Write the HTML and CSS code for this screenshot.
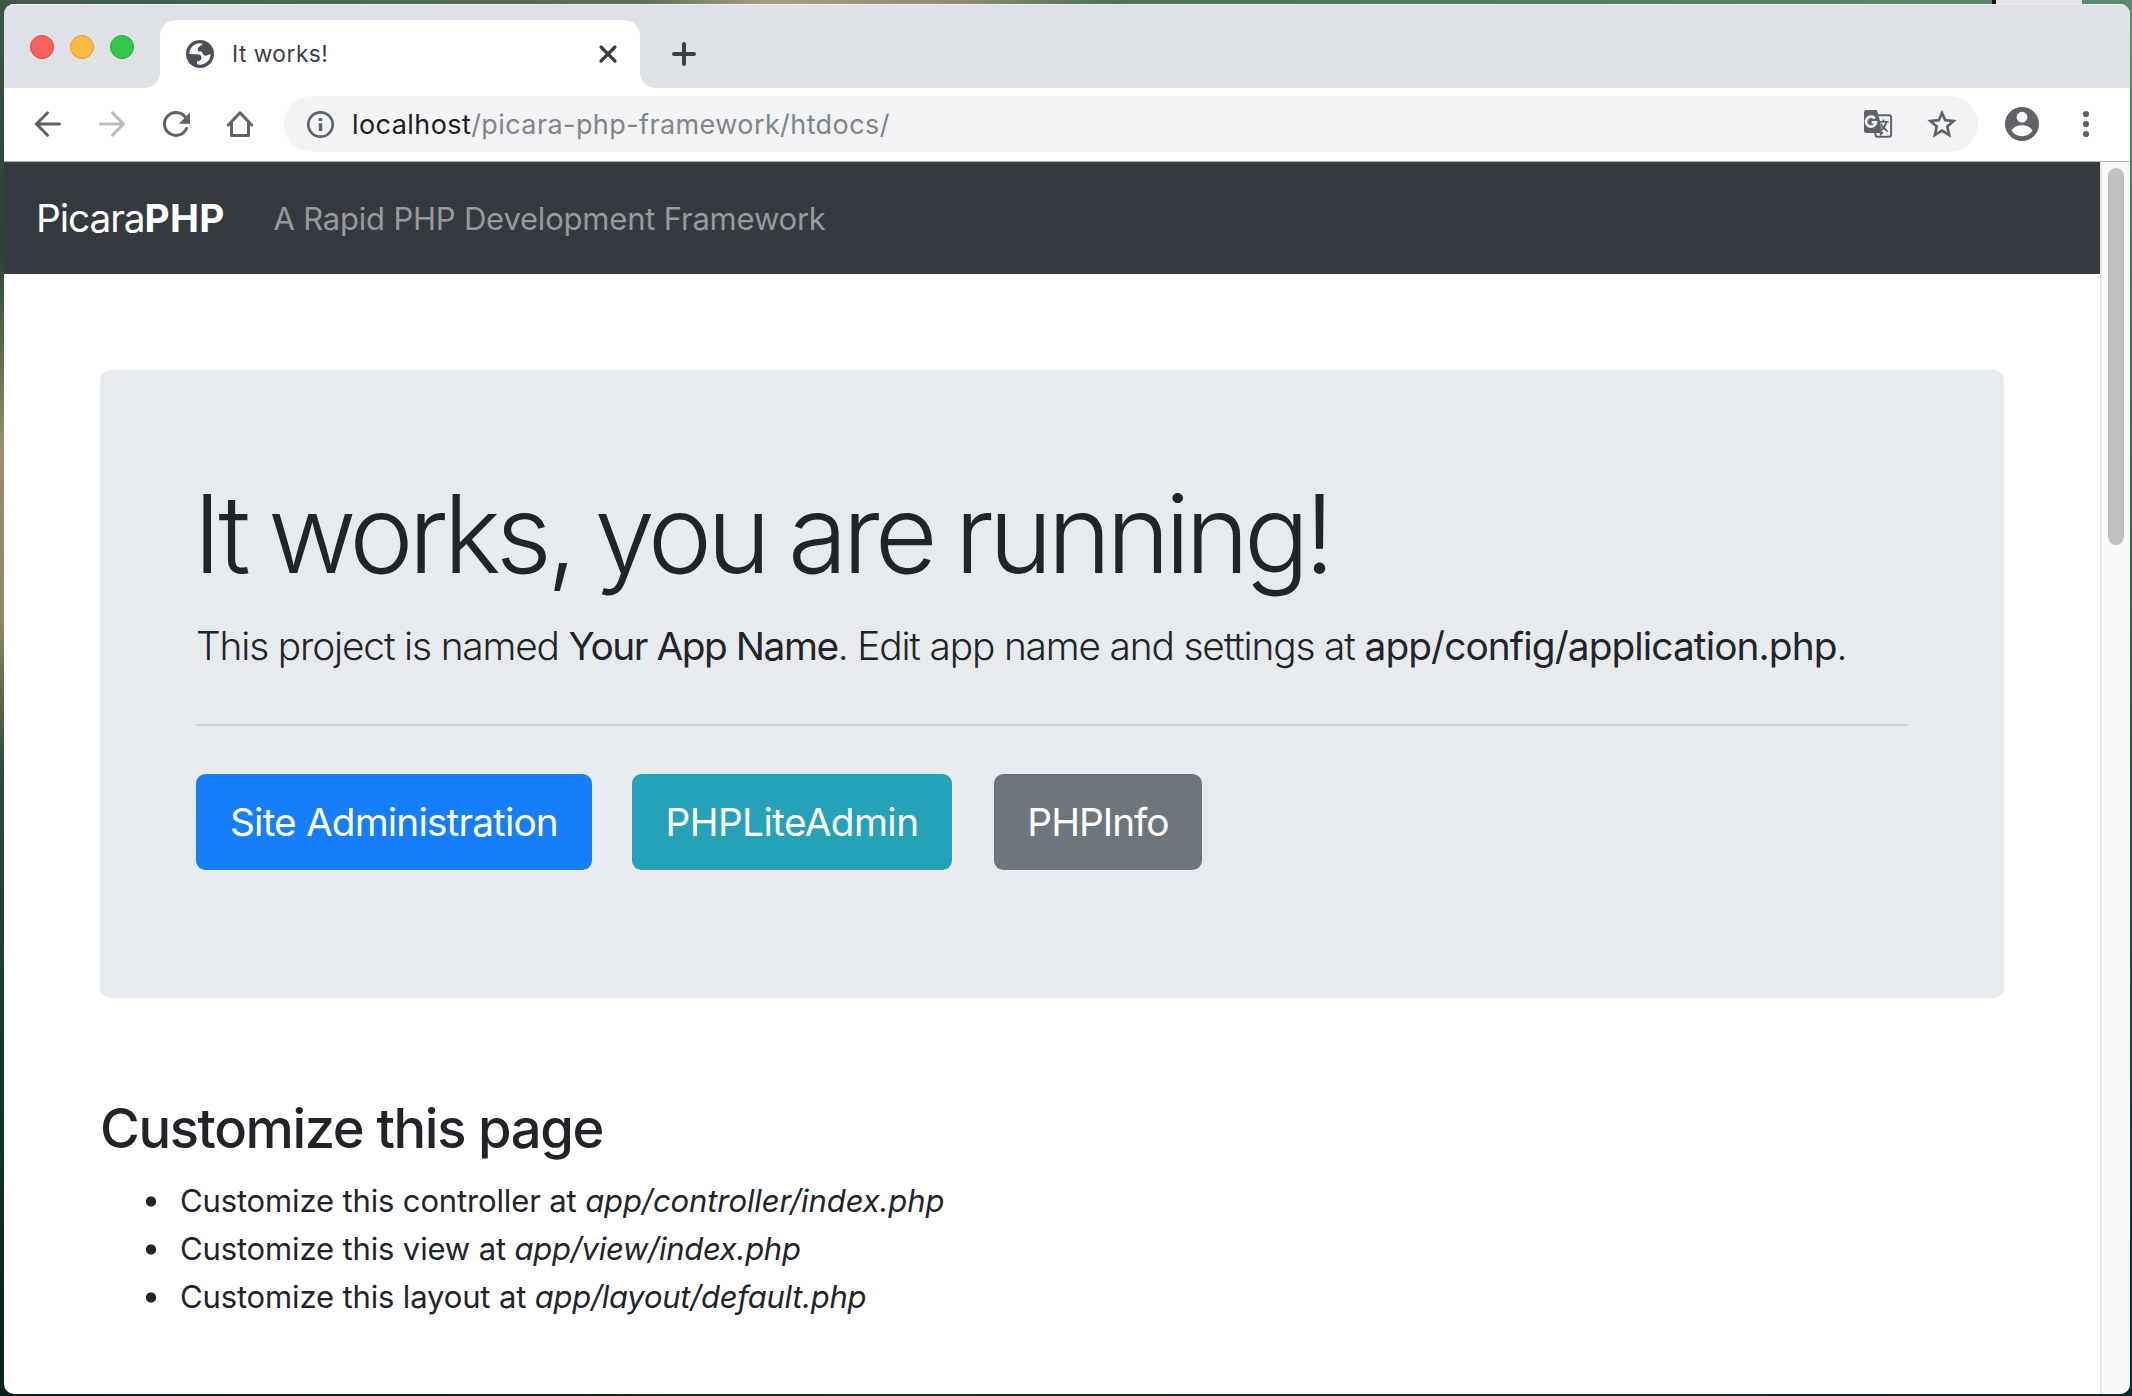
FILE: index.html
```
<!DOCTYPE html>
<html lang="en">
<head>
<meta charset="utf-8">
<title>It works!</title>
<link rel="stylesheet" href="styles.css">
</head>
<body>
<div class="desktop-window-behind"></div>
<div class="window">
  <header class="tab-strip">
    <div class="lights">
      <span class="light light-close"></span>
      <span class="light light-minimize"></span>
      <span class="light light-zoom"></span>
    </div>
    <div class="tab">
      <svg class="favicon" viewBox="0 0 28 28"><circle cx="14" cy="14" r="14" fill="#4b5056"/><path fill="#fff" d="M3.3 14A10.7 10.7 0 0 1 16.5 3.6C16.5 6 14 5.4 13 7C11.3 7.4 11.3 11.4 13.2 11.4L15 11.4C17 12 17 15.8 20 15.8L24.6 14A10.7 10.7 0 0 1 11 24.3V21.5C13 21.5 16 20.3 15.5 17.5C15 14 12 14.5 10 14.2Z"/></svg>
      <span class="tab-title">It works!</span>
      <svg class="tab-close" viewBox="0 0 20 20"><path d="M3 3L17 17M17 3L3 17"/></svg>
    </div>
    <svg class="new-tab" viewBox="0 0 28 28"><path d="M14 4V24M4 14H24"/></svg>
  </header>

  <div class="toolbar">
    <svg class="icon" viewBox="0 0 32 32"><path d="M27.500 16H4.500M15.500 4.800L4.500 16L15.500 27.200"/></svg>
    <svg class="icon icon-disabled" viewBox="0 0 32 32"><path d="M4.500 16H27.500M16.500 4.800L27.500 16L16.500 27.200"/></svg>
    <svg class="icon" viewBox="0 0 32 32"><path d="M25 8.800A11.500 11.500 0 1 0 26.500 20.500"/><path class="solid" d="M30 4.500V15.700H18.800Z"/></svg>
    <svg class="icon icon-home" viewBox="0 0 32 32"><path d="M4.300 17L16 4.800L27.700 17M7.500 15V27.500H24.500V15"/></svg>
    <div class="omnibox">
      <svg class="icon" viewBox="0 0 32 32"><circle cx="16.500" cy="16.500" r="12.200"/><path class="solid" d="M14.800 10H18.200V13H14.800ZM14.800 15.200H18.200V23H14.800Z"/></svg>
      <span class="url"><span class="host">localhost</span><span class="path">/picara-php-framework/htdocs/</span></span>
      <svg class="icon icon-translate" viewBox="0 0 32 32"><rect x="13.500" y="7.200" width="15.600" height="21.600" rx="2"/><path class="solid" d="M4.500 2H13.600C14.600 2 15 2.500 15.300 3.400L21.500 24.800L18.500 28L17.500 25H4.500C3 25 2 24.200 2 22.800V4.500C2 3 3 2 4.500 2Z"/><path class="glyph" d="M12.800 10.300A5 5 0 1 0 14 14.300H9.600"/><path class="halo" d="M18 13.800H26.500M21.500 11.500V13.800M24.200 14C23.500 18 21.500 21 19 23M19.500 16C20.500 19 23 21.500 25.500 23.500"/><path class="thin" d="M17 13.800H26.500M21.500 11.500V13.800M24.200 14C23.500 18 21 21 18 23M19 16C20.500 19 23 21.500 25.500 23.500"/></svg>
      <svg class="icon icon-star" viewBox="0 0 32 32"><path d="M16 5L19.200 12.200L27.500 13L21.300 18.600L23.100 27L16 22.700L8.900 27L10.700 18.600L4.500 13L12.800 12.200Z"/></svg>
    </div>
    <svg class="avatar" viewBox="0 0 36 36"><circle cx="18" cy="18" r="17" fill="#5f6368"/><circle cx="18" cy="11.200" r="5.400" fill="#fff"/><path fill="#fff" d="M7.500 24.500C9.500 20.800 14 19.200 18 19.200S26.500 20.800 28.500 24.500C26.500 28 22.500 30.200 18 30.200S9.500 28 7.500 24.500Z"/></svg>
    <svg class="icon icon-menu" viewBox="0 0 32 32"><circle cx="16" cy="6" r="3.100"/><circle cx="16" cy="16" r="3.100"/><circle cx="16" cy="26" r="3.100"/></svg>
  </div>

  <div class="viewport">
    <div class="page">
      <nav class="navbar">
        <a class="brand">Picara<b>PHP</b></a>
        <span class="tagline">A Rapid PHP Development Framework</span>
      </nav>
      <main class="container">
        <section class="jumbotron">
          <h1>It works, you are running!</h1>
          <p class="lead">This project is named <b>Your App Name</b>. Edit app name and settings at <b class="file">app/config/application.php</b>.</p>
          <hr>
          <div class="actions">
            <a class="btn btn-primary">Site Administration</a>
            <a class="btn btn-info">PHPLiteAdmin</a>
            <a class="btn btn-secondary">PHPInfo</a>
          </div>
        </section>
        <h2>Customize this page</h2>
        <ul>
          <li>Customize this controller at <em class="file-long">app/controller/index.php</em></li>
          <li>Customize this view at <em>app/view/index.php</em></li>
          <li>Customize this layout at <em>app/layout/default.php</em></li>
        </ul>
      </main>
    </div>
    <div class="scrollbar"><div class="thumb"></div></div>
  </div>
</div>
</body>
</html>
```
FILE: styles.css
```
* { box-sizing: border-box; }

body {
  position: relative;
  width: 2132px;
  height: 1396px;
  margin: 0;
  padding: 4px 2px 2px 4px;
  overflow: hidden;
  font-family: Inter, "Liberation Sans", sans-serif;
  color: #212529;
  background:
    linear-gradient(90deg, #3f5546 0, #4f6b55 15%, #5c6f58 30%, #a59f80 36%, #8c8c70 45%, #4f7259 52%, #5d8a70 100%) top / 100% 4px no-repeat,
    linear-gradient(#3f5546 0, #2c4035 18%, #54654e 24%, #9a9070 32%, #8d8466 45%, #2f4a3a 55%, #17392c 75%, #06201d 100%) left / 4px 100% no-repeat,
    linear-gradient(#5d8a70 0, #3f6a55 30%, #24503f 60%, #06302b 100%) right / 2px 100% no-repeat,
    linear-gradient(90deg, #06201d, #12301f 40%, #0a2b28) bottom / 100% 20px no-repeat,
    linear-gradient(90deg, #3f5546, #5d8a70);
}

.desktop-window-behind {
  position: absolute;
  top: 0;
  left: 1992px;
  width: 90px;
  height: 4px;
  background: #e4e4e4;
  border-left: 4px solid #151515;
}

.window {
  position: relative;
  display: flex;
  flex-direction: column;
  height: 1390px;
  overflow: hidden;
  background: #fff;
  border-radius: 10px;
}

/* Tab strip */
.tab-strip {
  display: flex;
  flex: none;
  height: 84px;
  padding: 16px 0 0 26px;
  background: #dee1e6;
  box-shadow: inset 0 1px #eceef1;
}

.lights { display: flex; gap: 16px; width: 130px; padding-top: 15px; }
.light { width: 24px; height: 24px; border: 1px solid; border-radius: 50%; }
.light-close { background: #fc605c; border-color: #e2443f; }
.light-minimize { background: #fdbc40; border-color: #dea034; }
.light-zoom { background: #34c84a; border-color: #27aa35; }

.tab {
  position: relative;
  display: flex;
  align-items: center;
  width: 480px;
  height: 68px;
  padding: 0 22px 0 26px;
  background: #fff;
  border-radius: 16px 16px 0 0;
}
.tab::before, .tab::after {
  content: "";
  position: absolute;
  bottom: 0;
  width: 16px;
  height: 16px;
}
.tab::before { left: -16px; background: radial-gradient(circle at 0 0, transparent 15.500px, #fff 16.500px); }
.tab::after { right: -16px; background: radial-gradient(circle at 100% 0, transparent 15.500px, #fff 16.500px); }

.favicon { width: 28px; height: 28px; }
.tab-title { margin-left: 18px; padding-bottom: 2px; font-size: 22.800px; letter-spacing: .45px; color: #3c4043; }
.tab-close { width: 20px; height: 20px; margin-left: auto; stroke: #3c4043; stroke-width: 3.200; stroke-linecap: round; }
.new-tab { width: 28px; height: 28px; margin: 20px 0 0 30px; stroke: #3c4043; stroke-width: 4; stroke-linecap: round; }

/* Toolbar */
.toolbar {
  display: flex;
  flex: none;
  align-items: center;
  height: 74px;
  padding: 0 0 1px 28px;
  background: #fff;
  border-bottom: 1px solid #b1b3b6;
}

.icon { flex: none; width: 32px; height: 32px; fill: none; stroke: #5f6368; stroke-width: 3; stroke-linecap: round; }
.toolbar > .icon { margin-right: 32px; }
.toolbar > .icon-home { margin-right: 28px; stroke-linejoin: round; }
.toolbar > .icon-menu { margin: 0 0 0 30px; fill: #5f6368; stroke: none; }
.toolbar > .icon-disabled { stroke: #babcbe; }
.icon .solid { fill: #5f6368; stroke: none; }

.omnibox {
  display: flex;
  align-items: center;
  width: 1694px;
  height: 56px;
  padding: 0 20px;
  background: #f1f3f4;
  border-radius: 28px;
}
.omnibox .icon { stroke-width: 2.700; }
.url { flex: 1; margin-left: 16px; font-size: 27px; letter-spacing: .43px; }
.host { color: #202124; }
.path { color: #80868b; letter-spacing: .41px; }
.omnibox .icon-translate { margin-right: 32px; stroke-width: 2; }
.omnibox .icon-translate .glyph { stroke: #fff; stroke-width: 2.600; stroke-linecap: butt; }
.omnibox .icon-translate .halo { stroke: #f1f3f4; stroke-width: 3; stroke-linecap: butt; }
.omnibox .icon-translate .thin { stroke-width: 1.800; stroke-linecap: butt; }

.avatar { flex: none; width: 36px; height: 36px; margin-left: 26px; }

/* Page */
.viewport { display: flex; flex: 1; min-height: 0; }
.page { flex: none; width: 2096px; }

.navbar {
  display: flex;
  align-items: center;
  height: 112px;
  padding-left: 32px;
  background: #343a40;
}
.brand { padding-bottom: 2px; font-size: 38.800px; letter-spacing: -1.050px; color: #fff; }
.brand b { letter-spacing: .2px; }
.tagline { margin-left: 49px; font-size: 31px; letter-spacing: -.2px; color: #98999b; }

.container { padding: 96px 96px 0; }

.jumbotron {
  height: 628px;
  padding: 97px 96px 0;
  background: #e8ebee;
  border-radius: 10px;
}

h1, h2, p, ul { margin: 0; }
h1 { margin: 0 0 15px -3px; font-size: 108.600px; font-weight: 310; line-height: 134px; letter-spacing: -5.150px; word-spacing: -3px; white-space: nowrap; }
.lead { font-size: 38.800px; font-weight: 300; line-height: 60px; letter-spacing: -1.140px; white-space: nowrap; }
.lead b { font-weight: 400; letter-spacing: -1.450px; }
.lead .file { letter-spacing: -.9px; }
hr { height: 2px; margin: 48px 0; background: #cfd2d5; border: 0; }

.actions { display: flex; }
.btn {
  display: flex;
  align-items: center;
  justify-content: center;
  height: 96px;
  padding-bottom: 2px;
  font-size: 38.800px;
  letter-spacing: -.86px;
  color: #fff;
  border-radius: 9.600px;
}
.btn-primary { width: 396px; background: #157efb; }
.btn-info { width: 320px; margin: 0 42px 0 40px; letter-spacing: -.6px; background: #26a2b8; }
.btn-secondary { width: 208px; letter-spacing: -.99px; background: #6d757d; }

h2 { margin: 97px 0 15px; font-size: 54.300px; font-weight: 550; line-height: 67px; letter-spacing: -1.380px; }
ul { padding: 0; list-style: none; }
li {
  padding-left: 80px;
  font-size: 31px;
  line-height: 48px;
  letter-spacing: -.14px;
  background: radial-gradient(circle at 51px 24.500px, #212529 4.700px, transparent 5.500px);
}
li em { letter-spacing: -.28px; }
li .file-long { letter-spacing: -.1px; }

.scrollbar { flex: 1; padding: 6px 6px 0; background: #fafafa; border-left: 2px solid #e7e7e7; border-right: 2px solid #ededed; }
.thumb { width: 16px; height: 377px; background: #c1c1c1; border-radius: 8px; }
```
